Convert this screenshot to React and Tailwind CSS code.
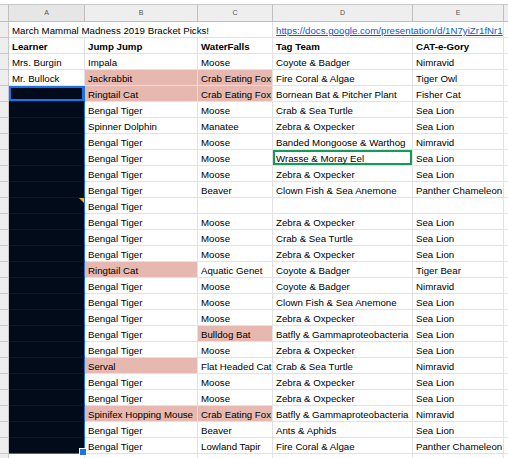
import React from 'react';

// Column widths (px incl. right gridline)
const W = { strip: 'w-[9px]', a: 'w-[76px]', b: 'w-[113px]', c: 'w-[75px]', d: 'w-[140px]', e: 'w-[91px]' };

const picks = [
  { a: 'Mrs. Burgin', b: 'Impala', c: 'Moose', d: 'Coyote & Badger', e: 'Nimravid' },
  { a: 'Mr. Bullock', b: 'Jackrabbit', c: 'Crab Eating Fox', d: 'Fire Coral & Algae', e: 'Tiger Owl', pb: true, pc: true },
  { b: 'Ringtail Cat', c: 'Crab Eating Fox', d: 'Bornean Bat & Pitcher Plant', e: 'Fisher Cat', pb: true, pc: true, active: true },
  { b: 'Bengal Tiger', c: 'Moose', d: 'Crab & Sea Turtle', e: 'Sea Lion' },
  { b: 'Spinner Dolphin', c: 'Manatee', d: 'Zebra & Oxpecker', e: 'Sea Lion' },
  { b: 'Bengal Tiger', c: 'Moose', d: 'Banded Mongoose & Warthog', e: 'Nimravid' },
  { b: 'Bengal Tiger', c: 'Moose', d: 'Wrasse & Moray Eel', e: 'Sea Lion', cursor: true },
  { b: 'Bengal Tiger', c: 'Moose', d: 'Zebra & Oxpecker', e: 'Sea Lion' },
  { b: 'Bengal Tiger', c: 'Beaver', d: 'Clown Fish & Sea Anemone', e: 'Panther Chameleon' },
  { b: 'Bengal Tiger', c: '', d: '', e: '', note: true },
  { b: 'Bengal Tiger', c: 'Moose', d: 'Zebra & Oxpecker', e: 'Sea Lion' },
  { b: 'Bengal Tiger', c: 'Moose', d: 'Crab & Sea Turtle', e: 'Sea Lion' },
  { b: 'Bengal Tiger', c: 'Moose', d: 'Zebra & Oxpecker', e: 'Sea Lion' },
  { b: 'Ringtail Cat', c: 'Aquatic Genet', d: 'Coyote & Badger', e: 'Tiger Bear', pb: true },
  { b: 'Bengal Tiger', c: 'Moose', d: 'Coyote & Badger', e: 'Nimravid' },
  { b: 'Bengal Tiger', c: 'Moose', d: 'Clown Fish & Sea Anemone', e: 'Sea Lion' },
  { b: 'Bengal Tiger', c: 'Moose', d: 'Zebra & Oxpecker', e: 'Sea Lion' },
  { b: 'Bengal Tiger', c: 'Bulldog Bat', d: 'Batfly & Gammaproteobacteria', e: 'Sea Lion', pc: true },
  { b: 'Bengal Tiger', c: 'Moose', d: 'Zebra & Oxpecker', e: 'Sea Lion' },
  { b: 'Serval', c: 'Flat Headed Cat', d: 'Crab & Sea Turtle', e: 'Nimravid', pb: true },
  { b: 'Bengal Tiger', c: 'Moose', d: 'Zebra & Oxpecker', e: 'Sea Lion' },
  { b: 'Bengal Tiger', c: 'Moose', d: 'Zebra & Oxpecker', e: 'Sea Lion' },
  { b: 'Spinifex Hopping Mouse', c: 'Crab Eating Fox', d: 'Batfly & Gammaproteobacteria', e: 'Nimravid', pb: true, pc: true },
  { b: 'Bengal Tiger', c: 'Beaver', d: 'Ants & Aphids', e: 'Sea Lion' },
  { b: 'Bengal Tiger', c: 'Lowland Tapir', d: 'Fire Coral & Algae', e: 'Panther Chameleon', last: true },
];

const cellBase = 'shrink-0 h-full border-r border-b border-[#e2e2e2] px-[3px] pt-[2px] leading-[14px] overflow-hidden whitespace-nowrap';

const Strip = () => <div className={`${W.strip} shrink-0 h-full bg-[#eeeeee] border-r border-b border-[#c8c8c8]`} />;

const App = () => {
  return (
    <div className="w-[508px] h-[458px] overflow-hidden bg-white text-black text-[9.7px] font-['Liberation_Sans',Arial,sans-serif]">
      <div className="h-[5px] border-b border-[#c8c8c8] bg-white" />

      {/* column letters */}
      <div className="flex h-[17px] bg-[#eeeeee] border-b border-[#c0c0c0] text-[7px] text-[#555] leading-[16px]">
        <div className={`${W.strip} shrink-0 border-r border-[#c0c0c0]`} />
        <div className={`${W.a} shrink-0 text-center border-r border-[#c0c0c0] bg-[#e6e6e6]`}>A</div>
        <div className={`${W.b} shrink-0 text-center border-r border-[#c0c0c0]`}>B</div>
        <div className={`${W.c} shrink-0 text-center border-r border-[#c0c0c0]`}>C</div>
        <div className={`${W.d} shrink-0 text-center border-r border-[#c0c0c0]`}>D</div>
        <div className={`${W.e} shrink-0 text-center border-r border-[#c0c0c0]`}>E</div>
        <div className="flex-1" />
      </div>

      {/* row 1: title + link, both overflowing neighbours */}
      <div className="flex h-[16px]">
        <Strip />
        <div className={`w-[264px] ${cellBase}`}>March Mammal Madness 2019 Bracket Picks!</div>
        <div className={`w-[231px] ${cellBase}`}>
          <span className="text-[#1155cc] underline">https://docs.google.com/presentation/d/1N7yiZr1fNr1</span>
        </div>
        <div className="flex-1 h-full border-b border-[#e2e2e2]" />
      </div>

      {/* row 2: headings */}
      <div className="flex h-[16px] font-bold">
        <Strip />
        <div className={`${W.a} ${cellBase}`}>Learner</div>
        <div className={`${W.b} ${cellBase}`}>Jump Jump</div>
        <div className={`${W.c} ${cellBase}`}>WaterFalls</div>
        <div className={`${W.d} ${cellBase}`}>Tag Team</div>
        <div className={`${W.e} ${cellBase}`}>CAT-e-Gory</div>
        <div className="flex-1 h-full border-b border-[#e2e2e2]" />
      </div>

      {picks.map((r, i) => (
        <div key={i} className="flex h-[16px]">
          <Strip />
          {r.a !== undefined ? (
            <div className={`${W.a} ${cellBase}`}>{r.a}</div>
          ) : (
            <div
              className={`${W.a} shrink-0 h-full relative bg-[#020b1a] border-r border-r-[#1a73e8] border-b ${r.last ? 'border-b-[#1a73e8]' : 'border-b-[#0e1828]'} ${r.active ? 'shadow-[inset_0_0_0_2px_#1a73e8]' : ''}`}
            >
              {r.note && (
                <span className="absolute top-0 right-0 w-0 h-0 border-l-[5px] border-l-transparent border-t-[5px] border-t-[#f4b400]" />
              )}
              {r.last && (
                <span className="absolute right-[-3px] bottom-[-3px] z-10 w-[8px] h-[8px] bg-[#1a73e8] border border-white" />
              )}
            </div>
          )}
          <div className={`${W.b} ${cellBase} ${r.pb ? 'bg-[#e6b8af]' : ''}`}>{r.b}</div>
          <div className={`${W.c} ${cellBase} ${r.pc ? 'bg-[#e6b8af]' : ''}`}>{r.c}</div>
          <div className={`${W.d} ${cellBase} ${r.cursor ? 'shadow-[inset_0_0_0_2px_#0f9d58]' : ''}`}>{r.d}</div>
          <div className={`${W.e} ${cellBase}`}>{r.e}</div>
          <div className="flex-1 h-full border-b border-[#e2e2e2]" />
        </div>
      ))}

      {/* partial row below */}
      <div className="flex h-[16px]">
        <Strip />
        <div className={`${W.a} ${cellBase}`} />
        <div className={`${W.b} ${cellBase}`} />
        <div className={`${W.c} ${cellBase}`} />
        <div className={`${W.d} ${cellBase}`} />
        <div className={`${W.e} ${cellBase}`} />
        <div className="flex-1" />
      </div>
    </div>
  );
};

export default App;
